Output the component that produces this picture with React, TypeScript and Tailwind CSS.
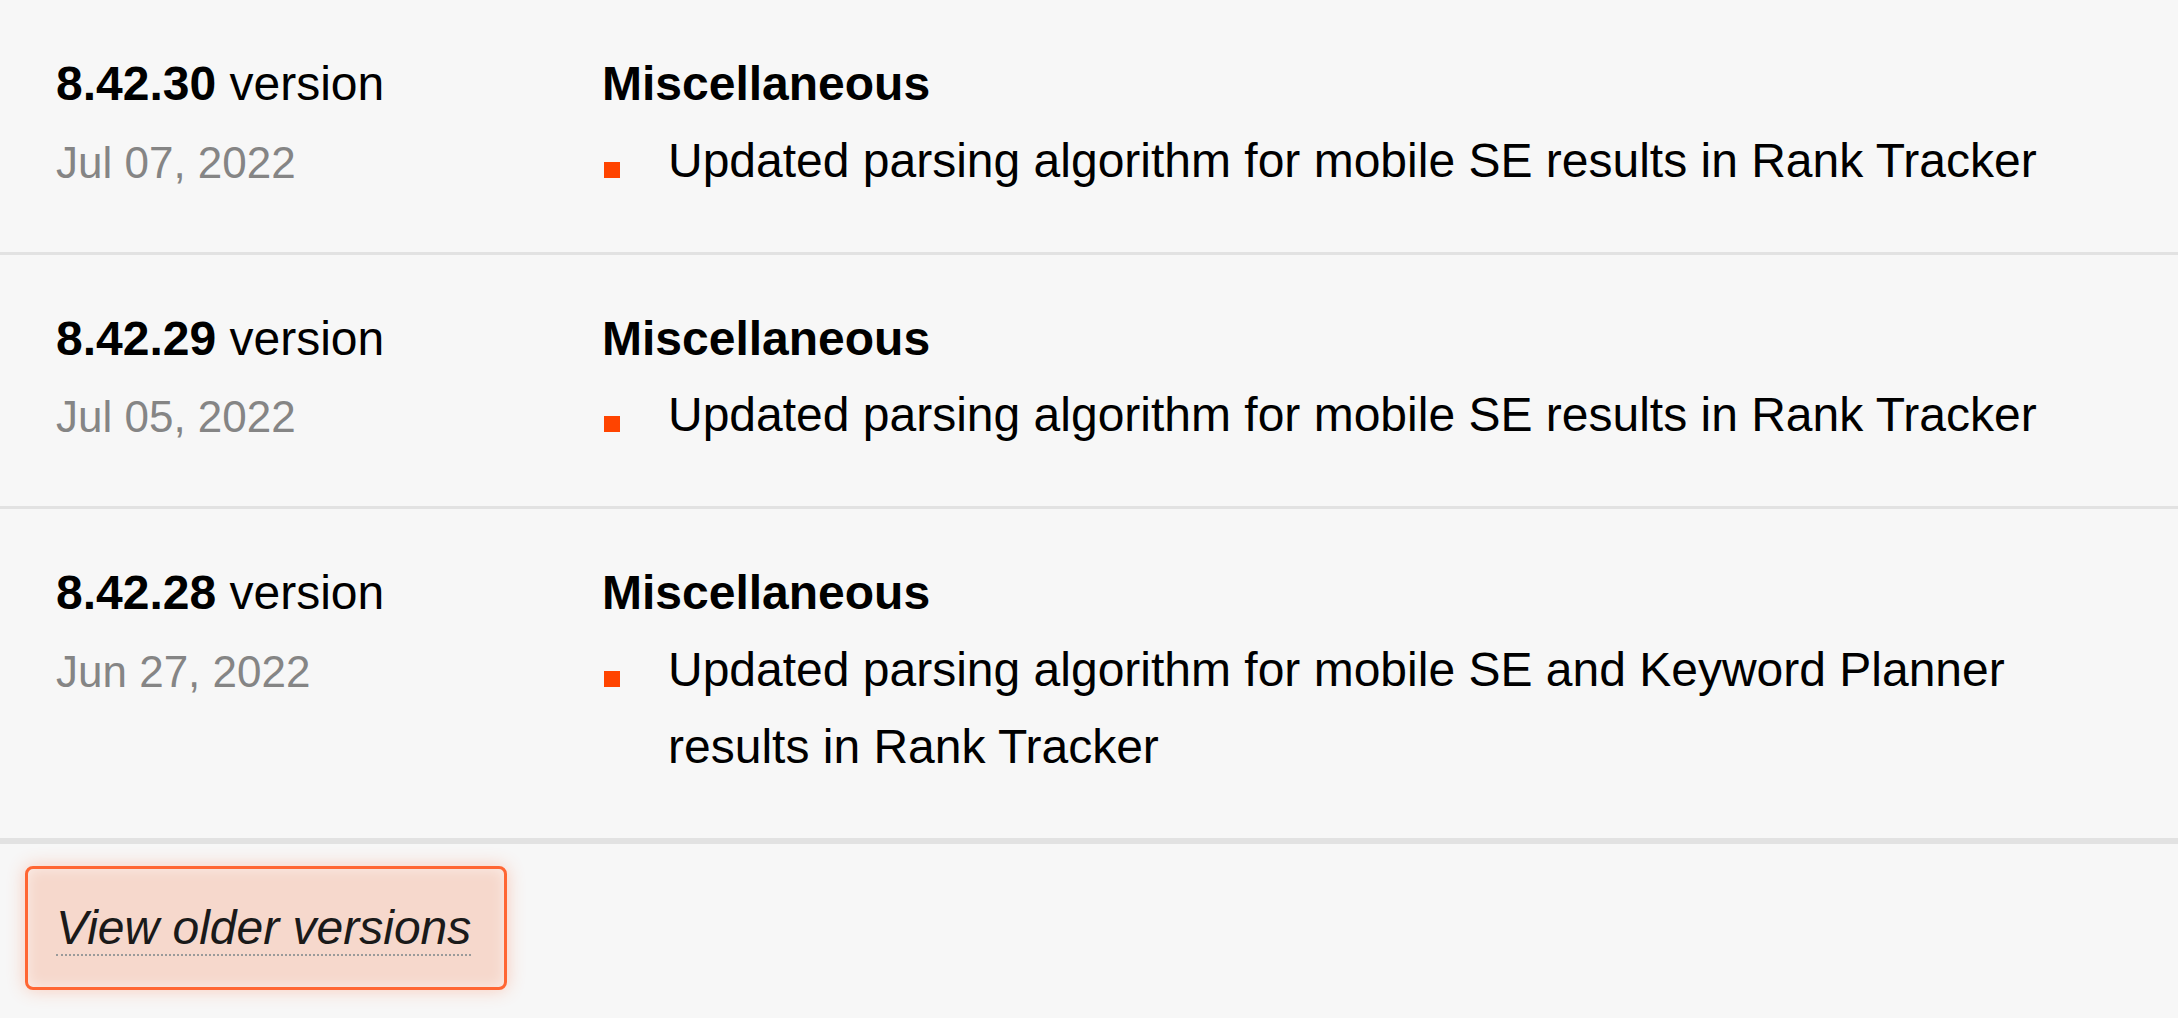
import React from 'react';

interface Release {
    version: string;
    date: string;
    section: string;
    items: string[];
}

const releases: Release[] = [
    {
        version: '8.42.30',
        date: 'Jul 07, 2022',
        section: 'Miscellaneous',
        items: ['Updated parsing algorithm for mobile SE results in Rank Tracker'],
    },
    {
        version: '8.42.29',
        date: 'Jul 05, 2022',
        section: 'Miscellaneous',
        items: ['Updated parsing algorithm for mobile SE results in Rank Tracker'],
    },
    {
        version: '8.42.28',
        date: 'Jun 27, 2022',
        section: 'Miscellaneous',
        items: ['Updated parsing algorithm for mobile SE and Keyword Planner results in Rank Tracker'],
    },
];

const ReleaseRow: React.FC<{ release: Release; last: boolean }> = ({ release, last }) => (
    <div className={`flex pl-[56px] pr-[78px] pt-[46px] pb-[52px] border-[#e2e2e2] ${last ? 'border-b-[6px]' : 'border-b-[3px]'}`}>
        {/* Version + date */}
        <div className="w-[546px] shrink-0">
            <div>
                <span className="font-bold">{release.version}</span> version
            </div>
            <div className="mt-[4px] text-[44px] leading-[72.8px] text-[#858585]">{release.date}</div>
        </div>

        {/* Changes */}
        <div className="flex-1 min-w-0">
            <h4 className="font-bold">{release.section}</h4>
            <ul>
                {release.items.map(item => (
                    <li key={item} className="flex items-start">
                        <span className="shrink-0 w-4 h-4 mt-[39px] ml-[2px] mr-[48px] bg-[#ff4400]" />
                        <span>{item}</span>
                    </li>
                ))}
            </ul>
        </div>
    </div>
);

export default function App() {
    return (
        <div className="min-h-screen bg-[#f7f7f7] text-black text-[48px] leading-[1.6] font-['Liberation_Sans',Arial,sans-serif]">
            <div>
                {releases.map((r, i) => (
                    <ReleaseRow key={r.version} release={r} last={i === releases.length - 1} />
                ))}
            </div>

            <button className="block w-fit ml-[25px] mt-[22px] pt-[21px] pb-[21px] pl-[28px] pr-[33px] border-[3px] border-[#ff6633] rounded-[8px] bg-[#f6d8cc] shadow-[0_0_18px_rgba(255,102,51,0.3),inset_0_0_14px_rgba(255,255,255,0.55)] text-left">
                <span className="italic text-[#1a1a1a] border-b-2 border-dotted border-[#9a9a9a]">View older versions</span>
            </button>
        </div>
    );
}
